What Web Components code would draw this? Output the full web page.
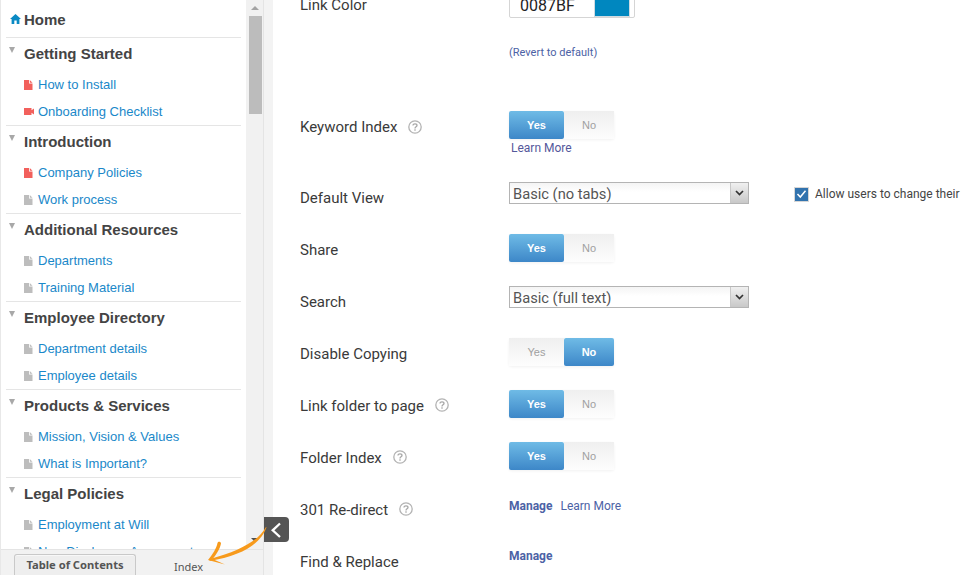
<!DOCTYPE html>
<html><head><meta charset="utf-8"><title>Settings</title>
<style>
html,body{margin:0;padding:0;width:961px;height:575px;overflow:hidden;background:#fff}
</style></head><body>
<x-app>
  <x-sidebar>
    <x-home>Home</x-home>
    <x-section title="Getting Started">
      <x-doc kind="pdf">How to Install</x-doc>
      <x-doc kind="video">Onboarding Checklist</x-doc>
    </x-section>
    <x-section title="Introduction">
      <x-doc kind="pdf">Company Policies</x-doc>
      <x-doc>Work process</x-doc>
    </x-section>
    <x-section title="Additional Resources">
      <x-doc>Departments</x-doc>
      <x-doc>Training Material</x-doc>
    </x-section>
    <x-section title="Employee Directory">
      <x-doc>Department details</x-doc>
      <x-doc>Employee details</x-doc>
    </x-section>
    <x-section title="Products &amp; Services">
      <x-doc>Mission, Vision &amp; Values</x-doc>
      <x-doc>What is Important?</x-doc>
    </x-section>
    <x-section title="Legal Policies">
      <x-doc>Employment at Will</x-doc>
      <x-doc>Non-Disclosure Agreement</x-doc>
    </x-section>
  </x-sidebar>
  <x-settings>
    <x-row label="Link Color" flush style="height:122px">
      <x-color value="0087BF"></x-color>
      <x-link small>(Revert to default)</x-link>
    </x-row>
    <x-row label="Keyword Index" help flush style="height:70px">
      <x-toggle value="yes"></x-toggle>
      <x-link>Learn More</x-link>
    </x-row>
    <x-row label="Default View">
      <x-inline>
        <x-select>Basic (no tabs)</x-select>
        <x-check>Allow users to change their</x-check>
      </x-inline>
    </x-row>
    <x-row label="Share"><x-toggle value="yes"></x-toggle></x-row>
    <x-row label="Search"><x-select>Basic (full text)</x-select></x-row>
    <x-row label="Disable Copying"><x-toggle value="no"></x-toggle></x-row>
    <x-row label="Link folder to page" help><x-toggle value="yes"></x-toggle></x-row>
    <x-row label="Folder Index" help><x-toggle value="yes"></x-toggle></x-row>
    <x-row label="301 Re-direct" help><x-manage more></x-manage></x-row>
    <x-row label="Find &amp; Replace"><x-manage style="padding-top:2px"></x-manage></x-row>
  </x-settings>
</x-app>
<script>
function def(name, css, html){
  customElements.define(name, class extends HTMLElement{
    connectedCallback(){
      if(this.shadowRoot) return;
      const r=this.attachShadow({mode:'open'});
      r.innerHTML='<style>'+css+'</style>'+(typeof html==='function'?html(this):html);
    }
  });
}
const esc=s=>(s||'').replace(/&/g,'&amp;').replace(/</g,'&lt;');

def('x-app',`
  :host{display:flex;position:relative;width:961px;height:575px;overflow:hidden;background:#fff}
  .collapse{position:absolute;left:264px;top:517px;width:25px;height:25px;background:#555;border-radius:0 4px 4px 0;z-index:3}
  .collapse svg{display:block}
  .arrow{position:absolute;left:200px;top:510px;z-index:4;overflow:visible}
`,`<slot></slot>
<div class="collapse"><svg width="25" height="25" viewBox="0 0 25 25"><path d="M16 6.5 L8.7 13.3 L16 20" fill="none" stroke="#fff" stroke-width="2.3"/></svg></div>
<svg class="arrow" width="70" height="60" viewBox="0 0 70 60"><path d="M66 17 C58 31 40 41 10 49 L9.5 51 C40 46 60 35 66.5 17.5 Z" fill="#f79a1c"/><path d="M17.5 33 C16.5 38 13 44 8 50 L25 54.5 L12.5 49 C16 45 20 39 21 33.5 C21 31.5 18 31 17.5 33 Z" fill="#f79a1c"/></svg>`);

def('x-sidebar',`
  :host{display:flex;flex-direction:column;flex:none;width:264px;height:575px;box-sizing:border-box;border-right:1px solid #e4e4e4;background:#f2f2f2;border-left:1px solid #e8e8e8}
  .top{flex:1;min-height:0;display:flex}
  .list{flex:1;min-width:0;background:#fff;overflow:hidden;padding:0 5px 0 5px}
  .bar{width:17px;flex:none;background:#f1f1f1;position:relative;display:flex;flex-direction:column;align-items:center;box-sizing:border-box}
  .up{width:0;height:0;border:4px solid transparent;border-top:0;border-bottom:4px solid #a3a3a3;margin-top:6px}
  .thumb{width:13px;height:98px;background:#bcbcbc;margin-top:6px;margin-left:1px}
  .down{width:0;height:0;border:4px solid transparent;border-bottom:0;border-top:4px solid #505050;margin-top:auto;margin-bottom:7px}
  .tabs{flex:none;height:26px;display:flex;align-items:flex-end;padding-left:13px;font:bold 11.2px "Noto Sans","Open Sans",sans-serif;border-top:1px solid #e4e4e4;box-sizing:border-box}
  .tab{height:21px;width:122px;box-sizing:border-box;border:1px solid #c9c9c9;border-bottom:0;border-radius:3px 3px 0 0;background:#eee;color:#555;text-align:center;line-height:19px;box-shadow:inset 0 1px 0 #f8f8f8}
  .idx{margin-left:38px;font-weight:400;color:#555;line-height:16px;font-size:11px}
`,`<div class="top"><div class="list"><slot></slot></div><div class="bar"><div class="up"></div><div class="thumb"></div><div class="down"></div></div></div>
<div class="tabs"><div class="tab">Table of Contents</div><div class="idx">Index</div></div>`);

def('x-home',`
  :host{display:flex;align-items:center;height:38px;box-sizing:border-box;border-bottom:1px solid #e5e5e5;padding-left:4px;padding-top:1px;font:bold 15px "Liberation Sans",sans-serif;color:#444;gap:3px}
  svg{flex:none}
`,`<svg width="11" height="10" viewBox="0 0 11 10"><path d="M5.5 0 L11 5 L9.4 5 L9.4 10 L6.7 10 L6.7 6.5 L4.3 6.5 L4.3 10 L1.6 10 L1.6 5 L0 5 Z" fill="#0a8ac4"/></svg><span><slot></slot></span>`);

def('x-section',`
  :host{display:block;height:88px;box-sizing:border-box;border-bottom:1px solid #e5e5e5;position:relative}
  .head{display:flex;height:29px;align-items:center;font:bold 15px "Liberation Sans",sans-serif;color:#444;padding-top:1px;box-sizing:border-box}
  .tri{flex:none;width:0;height:0;border:3.5px solid transparent;border-bottom:0;border-top:6px solid #a8a8a8;margin:0 9px 7px 3px}
  .items{padding:4px 0 0 18px}
`,h=>`<div class="head"><span class="tri"></span><span>${esc(h.getAttribute('title'))}</span></div><div class="items"><slot></slot></div>`);

def('x-doc',`
  :host{display:flex;align-items:center;height:27px;gap:4px;font:13px "Liberation Sans",sans-serif;color:#1a88c9;white-space:nowrap}
  svg{flex:none;display:block}
`,h=>{
  const k=h.getAttribute('kind');
  const ic = k==='video'
    ? `<svg width="10" height="9" viewBox="0 0 10 9"><path d="M0 1 H7.5 V3.2 L10 1.5 V7.5 L7.5 5.8 V8 H0 Z" fill="#f2605c"/></svg>`
    : `<svg width="9" height="10" viewBox="0 0 9 10" style="margin-right:1px"><path d="M0 0 H5 V3.5 H8.5 V10 H0 Z M5.8 0 L8.5 2.7 H5.8 Z" fill="${k==='pdf'?'#f2605c':'#bdbdbd'}"/></svg>`;
  return ic+`<span><slot></slot></span>`;
});

def('x-settings',`
  :host{display:block;flex:1;min-width:0;height:575px;overflow:hidden;padding-left:36px;box-sizing:border-box;position:relative}
  .g{position:absolute;left:0;top:0;bottom:0;width:9px;background:#f3f3f3}
  .inner{margin-top:-11px}
`,`<div class="g"></div><div class="inner"><slot></slot></div>`);

def('x-row',`
  :host{display:flex;height:52px;box-sizing:border-box;font:15px Roboto,sans-serif;color:#3a3a3a}
  .lab{flex:none;width:209px;display:flex;align-items:flex-start;height:36px;padding-top:7px;box-sizing:border-box;white-space:nowrap;gap:11px;line-height:20px}
  .val{flex:1;min-width:0;padding-top:1px}
  :host([flush]) .val{padding-top:0}
  :host([flush]) .lab span{margin-top:-1px}
  svg{flex:none;margin-top:2px}
`,h=>`<div class="lab"><span>${esc(h.getAttribute('label'))}</span>${h.hasAttribute('help')?`<svg width="14" height="14" viewBox="0 0 14 14"><circle cx="7" cy="7" r="6.2" fill="none" stroke="#b3b3b3" stroke-width="1.3"/><path d="M5 5.6 C5 4.4 5.9 3.8 7 3.8 C8.2 3.8 9 4.5 9 5.5 C9 6.8 7 6.9 7 8.4" fill="none" stroke="#a8a8a8" stroke-width="1.3"/><rect x="6.3" y="9.3" width="1.4" height="1.4" fill="#a8a8a8"/></svg>`:''}</div><div class="val"><slot></slot></div>`);

def('x-toggle',`
  :host{display:inline-flex;height:28px;font:bold 11px "Liberation Sans",sans-serif;vertical-align:top;box-shadow:0 1px 3px rgba(0,0,0,.06);border-radius:2px}
  div{display:flex;align-items:center;justify-content:center;box-sizing:border-box}
  .a{width:55px}.b{width:50px}
  .on{background:linear-gradient(#6fbbe6,#3d87c8);color:#fff;border-radius:2px}
  .off{background:linear-gradient(#efefef,#fdfdfd);color:#a0a0a0;font-weight:normal}
`,h=>{const y=h.getAttribute('value')==='yes';return `<div class="a ${y?'on':'off'}">Yes</div><div class="b ${y?'off':'on'}">No</div>`});

def('x-link',`
  :host{display:block;font:12px Roboto,sans-serif;color:#54589b;padding:1px 0 0 2px;white-space:nowrap;line-height:16px}
  :host([small]){font-size:11px;padding:27px 0 0;color:#4c62a5}
`,`<slot></slot>`);

def('x-color',`
  :host{display:flex;height:37px;width:126px;margin-top:-8px;box-sizing:border-box;border:1px solid #d5d5d5;border-radius:2px;align-items:center;justify-content:space-between;padding:0 5px 2px 10px;font:16px Roboto,sans-serif;color:#222;line-height:20px}
  .sw{width:34px;height:34px;background:#0087bf;box-shadow:0 0 0 1px #cfdbe2}
  span{position:relative;top:7px}
`,h=>`<span>${h.getAttribute('value')}</span><div class="sw"></div>`);

def('x-inline',`:host{display:flex;align-items:center;white-space:nowrap}`,`<slot></slot>`);

def('x-select',`
  :host{display:flex;height:22px;width:240px;box-sizing:border-box;border:1px solid #b4b4b4;background:linear-gradient(#f4f4f4,#fff 45%);font:14.7px Roboto,sans-serif;color:#555;line-height:20px}
  .t{flex:1;padding:1px 0 0 3px}
  .b{width:17px;background:linear-gradient(#f0f0f0,#c8c8c8);border-left:1px solid #c8c8c8;display:flex;align-items:center;justify-content:center}
`,`<div class="t"><slot></slot></div><div class="b"><svg width="9" height="6" viewBox="0 0 9 6"><path d="M1 1 L4.5 4.5 L8 1" fill="none" stroke="#333" stroke-width="1.7"/></svg></div>`);

def('x-check',`
  :host{display:flex;align-items:center;margin-left:46px;margin-top:2px;gap:7px;font:12px Roboto,sans-serif;color:#444}
  .c{width:13px;height:13px;background:#3273ae;box-shadow:0 0 0 1px #d6d6d6;display:flex;align-items:center;justify-content:center}
`,`<div class="c"><svg width="11" height="10" viewBox="0 0 11 10"><path d="M1.5 5 L4.3 8 L9.5 1.8" fill="none" stroke="#fff" stroke-width="1.5"/></svg></div><span><slot></slot></span>`);

def('x-manage',`
  :host{display:flex;gap:8px;font:12px Roboto,sans-serif;color:#4c62a5;line-height:16px;padding-top:4px}
  b{font-weight:bold}
`,h=>`<b>Manage</b>${h.hasAttribute('more')?'<span>Learn More</span>':''}`);
</script>
</body></html>
